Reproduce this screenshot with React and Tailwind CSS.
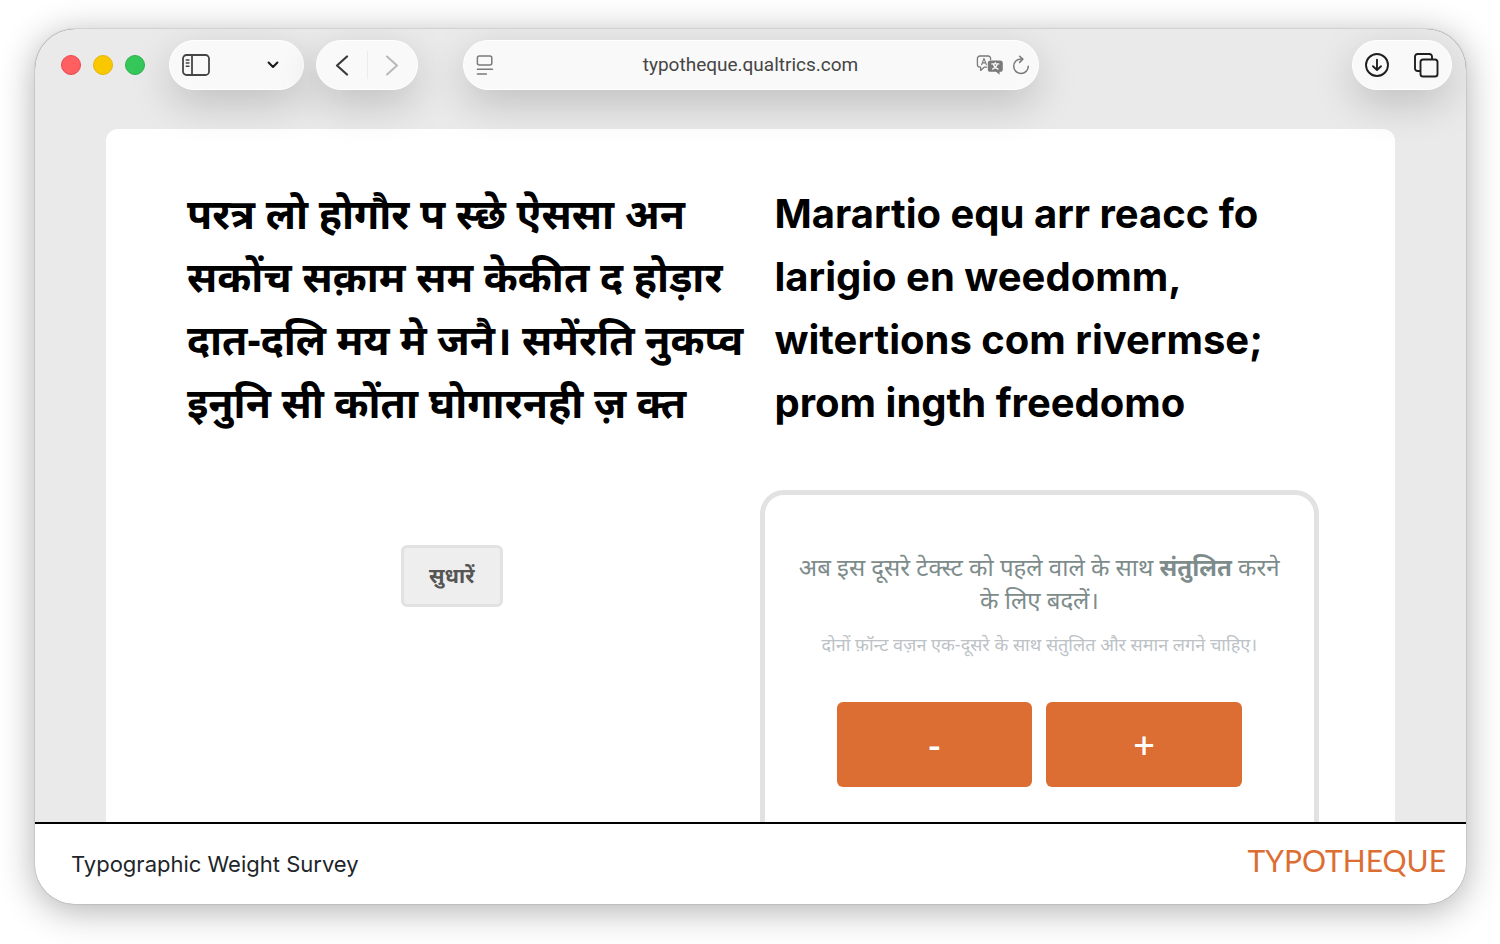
import React, { useState } from 'react';

const SidebarIcon = () => (
  <svg width="28" height="22" viewBox="0 0 28 22" fill="none" stroke="#454545" strokeWidth="1.8" strokeLinecap="round">
    <rect x="1" y="1" width="26" height="20" rx="3.5" />
    <path d="M10 1v20" />
    <path d="M4.2 6h2.8M4.2 9h2.8M4.2 12.2h2.8" strokeWidth="1.4" />
  </svg>
);

const ChevronDown = () => (
  <svg width="12" height="8" viewBox="0 0 12 8" fill="none" stroke="#1c1c1c" strokeWidth="2.1" strokeLinecap="round" strokeLinejoin="round">
    <path d="M1.6 1.6L6 6l4.4-4.4" />
  </svg>
);

const BackIcon = () => (
  <svg width="14" height="21" viewBox="0 0 14 21" fill="none" stroke="#3a3a3a" strokeWidth="2.2" strokeLinecap="round" strokeLinejoin="round">
    <path d="M12 1.5L2 10.5l10 9" />
  </svg>
);

const ForwardIcon = () => (
  <svg width="14" height="21" viewBox="0 0 14 21" fill="none" stroke="#b9b9b9" strokeWidth="2" strokeLinecap="round" strokeLinejoin="round">
    <path d="M2 1.5l10 9-10 9" />
  </svg>
);

const ReaderIcon = () => (
  <svg width="18" height="20" viewBox="0 0 18 20" fill="none" stroke="#7a7a7a" strokeWidth="1.5" strokeLinecap="round">
    <rect x="1.4" y="1" width="14.4" height="9" rx="2" />
    <path d="M1.4 14.2h15M1.4 19h9" />
  </svg>
);

const TranslateIcon = () => (
  <svg width="28" height="20" viewBox="0 0 28 20" fill="none" strokeLinecap="round" strokeLinejoin="round">
    <path d="M10.5 12.2H8.2L4.6 15.4v-3.2H4a2.6 2.6 0 0 1-2.6-2.6V3.6A2.6 2.6 0 0 1 4 1h8a2.6 2.6 0 0 1 2.6 2.6v1" stroke="#7a7a7a" strokeWidth="1.3" />
    <path d="M5.6 9.8L8 3.4l2.4 6.4M6.4 7.9h3.2" stroke="#7a7a7a" strokeWidth="1.1" />
    <path d="M14.4 5.4h9.8A2.6 2.6 0 0 1 26.8 8v6.2a2.6 2.6 0 0 1-2.6 2.6h-.6v3L20 16.8h-5.6A2.6 2.6 0 0 1 11.8 14.2V8a2.6 2.6 0 0 1 2.6-2.6z" fill="#7a7a7a" />
    <path d="M15.8 8.9h7M19.3 7.6v1.3M21.3 9.2c-.6 2.2-2.4 4-4.8 4.9M17.3 9.2c.6 2.2 2.4 4 4.8 4.9" stroke="#f9f9f9" strokeWidth="1.3" />
  </svg>
);

const ReloadIcon = () => (
  <svg width="18" height="20" viewBox="0 0 18 20" fill="none" stroke="#7a7a7a" strokeWidth="1.5" strokeLinecap="round" strokeLinejoin="round">
    <path d="M16.3 11.2A7.3 7.3 0 1 1 9 3.9h1.2" />
    <path d="M7.6 1.2l3.3 2.9-3.3 3.3" />
  </svg>
);

const DownloadIcon = () => (
  <svg width="24" height="24" viewBox="0 0 24 24" fill="none" stroke="#1f1f1f" strokeWidth="1.9" strokeLinecap="round" strokeLinejoin="round">
    <circle cx="12" cy="12" r="11" />
    <path d="M12 6.8v10M8 13.2l4 3.8 4-3.8" />
  </svg>
);

const TabsIcon = () => (
  <svg width="26" height="26" viewBox="0 0 26 26" fill="none" stroke="#1f1f1f" strokeWidth="1.9" strokeLinejoin="round">
    <path d="M7 19H4.6A2.6 2.6 0 0 1 2 16.4V4.6A2.6 2.6 0 0 1 4.6 2h11.8A2.6 2.6 0 0 1 19 4.6V7" />
    <rect x="7.5" y="7.5" width="17" height="17" rx="2.6" />
  </svg>
);

const pill = 'flex h-[50px] items-center rounded-full border border-white bg-[#f9f9f9] shadow-[0_14px_40px_rgba(0,0,0,0.18)]';

const Toolbar = () => (
  <header className="relative z-10 grid grid-cols-[1fr_minmax(0,576px)_1fr] items-start px-[14px] pt-[11px] pb-[39px]">
    <div className="flex items-center gap-3 pl-3">
      <div className="mr-3 flex gap-3">
        <button aria-label="Close" className="h-5 w-5 rounded-full border border-[#e5484d] bg-[#ff5f61]" />
        <button aria-label="Minimize" className="h-5 w-5 rounded-full border border-[#e3b505] bg-[#fac800]" />
        <button aria-label="Zoom" className="h-5 w-5 rounded-full border border-[#2bb04c] bg-[#35c759]" />
      </div>
      <div className={`${pill} w-[135px] justify-between pl-3 pr-6`}>
        <button aria-label="Show sidebar"><SidebarIcon /></button>
        <button aria-label="Tab groups"><ChevronDown /></button>
      </div>
      <div className={`${pill} w-[102px] justify-between px-[18px]`}>
        <button aria-label="Back"><BackIcon /></button>
        <div className="h-7 w-px bg-[#ececec]" />
        <button aria-label="Forward" disabled><ForwardIcon /></button>
      </div>
    </div>

    <div className={`${pill} px-2`}>
      <button aria-label="Reader" className="w-[54px] pl-1"><ReaderIcon /></button>
      <input
        type="text"
        aria-label="Address"
        defaultValue="typotheque.qualtrics.com"
        className="min-w-0 flex-1 bg-transparent text-center font-['Roboto',sans-serif] text-[19px] text-[#454545] outline-none"
      />
      <div className="flex w-[54px] items-center justify-between">
        <button aria-label="Translate"><TranslateIcon /></button>
        <button aria-label="Reload"><ReloadIcon /></button>
      </div>
    </div>

    <div className="flex justify-end">
      <div className={`${pill} w-[100px] justify-between px-3`}>
        <button aria-label="Downloads"><DownloadIcon /></button>
        <button aria-label="Tab overview"><TabsIcon /></button>
      </div>
    </div>
  </header>
);

const hindiLines = [
  'परत्र लो होगौर प स्छे ऐससा अन',
  'सकोंच सक़ाम सम केकीत द होड़ार',
  'दात-दलि मय मे जनै। समेंरति नुकप्व',
  'इनुनि सी कोंता घोगारनही ज़ क्त',
];

const latinLines = [
  'Marartio equ arr reacc fo',
  'larigio en weedomm,',
  'witertions com rivermse;',
  'prom ingth freedomo',
];

const weights = ['font-normal', 'font-medium', 'font-semibold', 'font-bold', 'font-extrabold'];

const Sample = ({ lines, className }) => (
  <p className={`pl-[15px] leading-[63px] whitespace-nowrap text-black ${className}`}>
    {lines.map((line) => (
      <span key={line} className="block">{line}</span>
    ))}
  </p>
);

const Survey = () => {
  const [weight, setWeight] = useState(3);

  const buttonClass = 'h-[85px] flex-1 rounded-md bg-[#dc6e33] text-[38px] font-medium text-white';

  return (
    <main className="mx-[71px] min-h-0 flex-1 overflow-hidden rounded-t-xl bg-white pt-[53px] pr-[76px] pl-[66px] font-['Noto_Sans',sans-serif]">
      <div className="grid grid-cols-2 gap-x-7 gap-y-14">
        <Sample lines={hindiLines} className="text-[41px] font-bold" />
        <Sample lines={latinLines} className={`font-['Inter',sans-serif] text-[40px] ${weights[weight]}`} />

        <div className="flex items-start justify-center pt-[55px]">
          <button className="h-[62px] w-[102px] rounded-md border-[3px] border-[#e2e2e2] bg-[#eeeeee] text-[21px] font-bold text-[#555555]">
            सुधारें
          </button>
        </div>

        <section className="rounded-t-[24px] border-[5px] border-b-0 border-[#e2e2e2] px-8 pt-[55px] pb-20 text-center">
          <p className="text-[24px] leading-[33px] text-[#7d8c8b]">
            अब इस दूसरे टेक्स्ट को पहले वाले के साथ <strong>संतुलित</strong> करने
            <br />
            के लिए बदलें।
          </p>
          <p className="mt-[14px] text-[18px] leading-[28px] whitespace-nowrap text-[#bcc2c6]">
            दोनों फ़ॉन्ट वज़न एक-दूसरे के साथ संतुलित और समान लगने चाहिए।
          </p>
          <div className="mt-11 flex gap-[14px] px-10">
            <button className={buttonClass} onClick={() => setWeight(Math.max(0, weight - 1))}>-</button>
            <button className={buttonClass} onClick={() => setWeight(Math.min(weights.length - 1, weight + 1))}>+</button>
          </div>
        </section>
      </div>
    </main>
  );
};

const App = () => (
  <div className="h-screen bg-white pt-[29px] pr-[34px] pb-10 pl-[35px] font-['Inter','Noto_Sans',sans-serif]">
    <div className="flex h-full flex-col overflow-hidden rounded-[40px] bg-[#eaeaea] shadow-[0_0_1px_rgba(0,0,0,0.7),0_6px_36px_rgba(0,0,0,0.32)]">
      <Toolbar />
      <Survey />
      <footer className="flex h-[82px] shrink-0 items-center justify-between border-t-2 border-black bg-white pr-5 pl-9">
        <span className="text-[22px] text-[#212529]">Typographic Weight Survey</span>
        <a href="#" className="pb-2 font-['Lato',sans-serif] text-[30px] text-[#dc6e33]">TYPOTHEQUE</a>
      </footer>
    </div>
  </div>
);

export default App;
